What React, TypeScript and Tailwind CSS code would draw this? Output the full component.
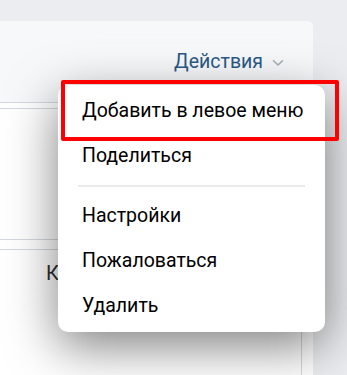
const menu = [
  ["Добавить в левое меню", "Поделиться"],
  ["Настройки", "Пожаловаться", "Удалить"],
];

function Chevron() {
  return (
    <svg width="12" height="8" viewBox="0 0 12 8" fill="none" className="mt-[2px]">
      <path d="M1.5 1.75L6 6L10.5 1.75" stroke="#a3adb8" strokeWidth="1.6" strokeLinecap="round" strokeLinejoin="round" />
    </svg>
  );
}

export default function App() {
  return (
    <div className="relative w-[347px] h-[375px] overflow-hidden bg-[#ebedf0] pt-[21px] pr-[34px] font-['Roboto',sans-serif]">
      {/* page card */}
      <div className="ml-[-10px] h-full bg-white rounded-tr-[6px] overflow-hidden">
        <div className="h-[82px] bg-[#f7f8fa] border-b border-[#d3d9de] flex items-center justify-end pr-[29px] gap-[9px]">
          <span className="text-[19.5px] text-[#2a5885] leading-none">Действия</span>
          <Chevron />
        </div>
        <div className="pt-[5px] pr-[11px]">
          <div className="h-[132px] border-y border-r border-[#d3d9de]" />
          <div className="mt-[9px] h-[200px] border-t border-r border-[#d3d9de] pl-[56px] pt-[8px]">
            <span className="text-[20px] text-[#2c2d2e]">К</span>
          </div>
        </div>
      </div>

      {/* dropdown */}
      <div className="absolute left-[58px] top-[85px] w-[267px] bg-white rounded-[10px] pt-[3px] pb-[4px] shadow-[0_14px_50px_rgba(0,0,0,0.5)]">
        {menu.map((group, gi) => (
          <div key={gi}>
            {gi > 0 && (
              <div className="h-[15px] flex items-center px-[20px]">
                <div className="h-[2px] w-full bg-[#eaebed]" />
              </div>
            )}
            {group.map((item) => (
              <div key={item} className="h-[45px] flex items-center pl-[24px] text-[19.5px] text-black">
                {item}
              </div>
            ))}
          </div>
        ))}
      </div>

      {/* highlight */}
      <div className="absolute left-[61px] top-[80px] w-[278px] h-[61px] border-4 border-[#ff0000] rounded-[2px]" />
    </div>
  );
}
